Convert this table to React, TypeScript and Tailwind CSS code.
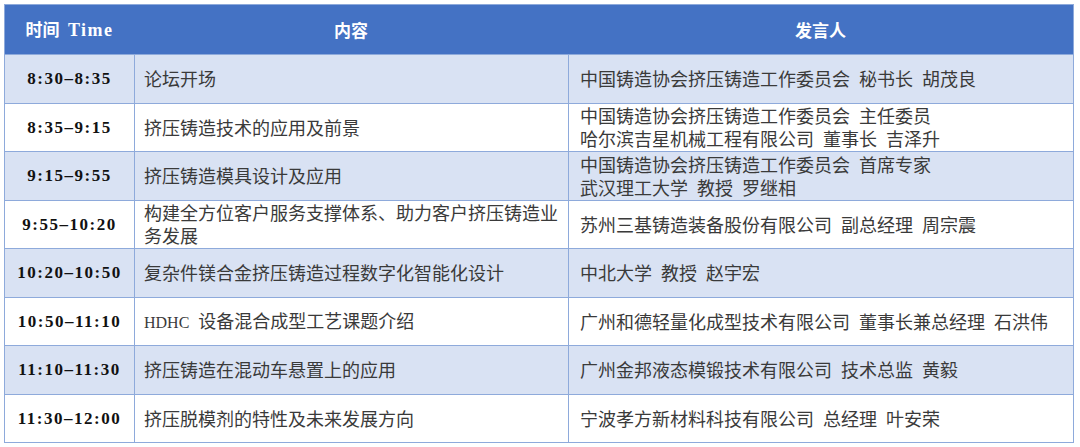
const rows: { time: string; topic: string[]; speaker: string[] }[] = [
  { time: "8:30–8:35", topic: ["论坛开场"], speaker: ["中国铸造协会挤压铸造工作委员会 秘书长 胡茂良"] },
  {
    time: "8:35–9:15",
    topic: ["挤压铸造技术的应用及前景"],
    speaker: ["中国铸造协会挤压铸造工作委员会 主任委员", "哈尔滨吉星机械工程有限公司 董事长 吉泽升"],
  },
  {
    time: "9:15–9:55",
    topic: ["挤压铸造模具设计及应用"],
    speaker: ["中国铸造协会挤压铸造工作委员会 首席专家", "武汉理工大学 教授 罗继相"],
  },
  {
    time: "9:55–10:20",
    topic: ["构建全方位客户服务支撑体系、助力客户挤压铸造业", "务发展"],
    speaker: ["苏州三基铸造装备股份有限公司 副总经理 周宗震"],
  },
  { time: "10:20–10:50", topic: ["复杂件镁合金挤压铸造过程数字化智能化设计"], speaker: ["中北大学 教授 赵宇宏"] },
  { time: "10:50–11:10", topic: ["HDHC 设备混合成型工艺课题介绍"], speaker: ["广州和德轻量化成型技术有限公司 董事长兼总经理 石洪伟"] },
  { time: "11:10–11:30", topic: ["挤压铸造在混动车悬置上的应用"], speaker: ["广州金邦液态模锻技术有限公司 技术总监 黄毅"] },
  { time: "11:30–12:00", topic: ["挤压脱模剂的特性及未来发展方向"], speaker: ["宁波孝方新材料科技有限公司 总经理 叶安荣"] },
];

const cjk = "font-['Noto_Sans_CJK_SC',sans-serif]";
const serif = "font-['Liberation_Serif','Noto_Sans_CJK_SC',serif]";

// wide spaces like the original document
function Line({ text }: { text: string }) {
  if (text.startsWith("HDHC")) {
    return (
      <div className="whitespace-nowrap">
        <span className={`${serif} text-[16px]`}>HDHC</span>
        {"\u2002"}
        {text.slice(5)}
      </div>
    );
  }
  return <div className="whitespace-nowrap">{text.split(" ").join("\u2002")}</div>;
}

export default function App() {
  return (
    <div className="w-[1080px] h-[447px] bg-white pt-[4px] pl-[4px]">
      <div className="w-[1070px] border border-[#8eaadb]">
        <div className="grid grid-cols-[129px_434px_505px] h-[49px] bg-[#4472c4] text-white font-bold text-[17px] items-center">
          <div className={`text-center ${cjk}`}>
            时间{"\u2002"}
            <span className={`${serif} tracking-[1.5px] text-[18px]`}>Time</span>
          </div>
          <div className={`text-center ${cjk}`}>内容</div>
          <div className={`text-center ${cjk}`}>发言人</div>
        </div>
        {rows.map((r, i) => (
          <div
            key={r.time}
            className={`grid grid-cols-[129px_434px_505px] h-[48.5px] border-t border-[#8eaadb] ${
              i % 2 === 0 ? "bg-[#d9e2f3]" : "bg-white"
            }`}
          >
            <div className={`flex items-center justify-center font-bold text-[17px] tracking-[1.5px] text-[#111] ${serif}`}>
              {r.time}
            </div>
            <div className={`flex flex-col justify-center border-l border-[#8eaadb] pl-[9px] text-[18px] leading-[23px] text-[#3a3a3a] ${cjk}`}>
              {r.topic.map((t) => (
                <Line key={t} text={t} />
              ))}
            </div>
            <div className={`flex flex-col justify-center border-l border-[#8eaadb] pl-[11px] text-[18px] leading-[23px] text-[#3a3a3a] ${cjk}`}>
              {r.speaker.map((t) => (
                <Line key={t} text={t} />
              ))}
            </div>
          </div>
        ))}
      </div>
    </div>
  );
}
